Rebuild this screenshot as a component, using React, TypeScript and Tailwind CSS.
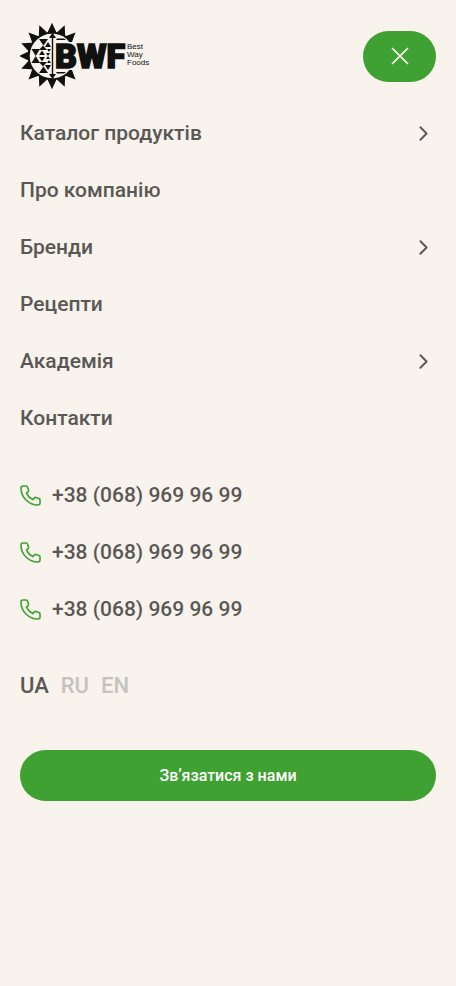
import { ChevronRight, X } from 'lucide-react';

const MENU = [
  { label: 'Каталог продуктів', nested: true },
  { label: 'Про компанію', nested: false },
  { label: 'Бренди', nested: true },
  { label: 'Рецепти', nested: false },
  { label: 'Академія', nested: true },
  { label: 'Контакти', nested: false },
];

const PHONES = ['+38 (068) 969 96 99', '+38 (068) 969 96 99', '+38 (068) 969 96 99'];

// sun rays, clockwise from the top; the ones behind the lettering are left out
const RAYS = [0, 1, 2, 6, 7, 8, 9, 10, 11, 12, 13, 14, 15];

const Logo = () => (
  <svg width="131" height="68" viewBox="0 0 131 68" fill="#11110f" aria-label="BWF Best Way Foods">
    {RAYS.map((n) => (
      <path key={n} d="M32 0.800 L36.500 10.500 H27.500 Z" transform={`rotate(${n * 22.5} 32 34)`} />
    ))}
    <path d="M51 20.500 A23.300 23.300 0 1 0 51 47.500" fill="none" stroke="#11110f" strokeWidth="2" />
    {/* upper half of the ornament, mirrored for the lower one */}
    {['', 'matrix(1 0 0 -1 0 68)'].map((flip) => (
      <g key={flip} transform={flip}>
        <path d="M19 17 H28 L23.500 23.500 Z" />
        <path d="M11.500 27 H20 L15.700 34 Z" />
        <path d="M19 28 L23 23.500 L27 28 Z" />
        <path d="M19 33 L22 28.500 L25 33 Z" />
        <path d="M25 25 L28 20 L31 25 Z" />
        <path d="M27 27 H31 L29 30 Z M26 31 H30 L28 34 Z" />
        <path d="M32.500 10.800 L36 16 H33.200 V34 H31.800 V16 H29 Z" />
        <path d="M37 16.500 H44 L46 18 H36 Z" />
      </g>
    ))}
    <path d="M34 20 H60 V48 H34 Z" fill="#f8f3ed" />
    <text
      x="35"
      y="46"
      fontFamily="Roboto, sans-serif"
      fontSize="34"
      fontWeight="900"
      stroke="#11110f"
      strokeWidth="1.6"
    >
      BWF
    </text>
    <g fontFamily="Liberation Sans, sans-serif" fontSize="8">
      <text x="107" y="27">Best</text>
      <text x="107" y="35">Way</text>
      <text x="107" y="43">Foods</text>
    </g>
  </svg>
);

const PhoneIcon = () => (
  <svg
    width="21"
    height="21"
    viewBox="0 0 21 21"
    fill="none"
    stroke="#3ea131"
    strokeWidth="1.6"
    strokeLinecap="round"
    strokeLinejoin="round"
  >
    <path d="M3 1 H6.200 Q7.200 1 7.500 2 L8.500 5 Q8.800 6 8 6.700 L6.400 8.100 C7.800 11 10 13.200 12.900 14.600 L14.300 13 Q15 12.200 16 12.500 L19 13.500 Q20 13.800 20 14.800 V18 Q20 20 18 20 C8.600 20 1 12.400 1 3 Q1 1 3 1 Z" />
  </svg>
);

const App = () => {
  return (
    <div className="min-h-screen bg-[#f8f3ed] px-5 pt-[22px] pb-10 font-['Roboto',sans-serif] text-[21px] leading-8 font-medium text-[#5a5855]">
      <header className="flex items-center justify-between">
        <a href="#home">
          <Logo />
        </a>
        <button
          type="button"
          aria-label="Закрити меню"
          className="flex h-[51px] w-[73px] items-center justify-center rounded-full bg-[#3ea131] text-white"
        >
          <X size={30} strokeWidth={1.4} />
        </button>
      </header>

      <nav className="mt-[27px] flex flex-col gap-[25px]">
        {MENU.map((item) => (
          <a key={item.label} href="#menu" className="flex items-center justify-between">
            {item.label}
            {item.nested && <ChevronRight size={25} strokeWidth={1.8} />}
          </a>
        ))}
      </nav>

      <div className="mt-[45px] flex flex-col gap-[25px]">
        {PHONES.map((phone, idx) => (
          <a key={idx} href="tel:+380689699699" className="flex items-center gap-[11px]">
            <PhoneIcon />
            {phone}
          </a>
        ))}
      </div>

      <div className="mt-[45px] flex gap-3 text-[22px]">
        <a href="#ua">UA</a>
        <a href="#ru" className="text-[#c5c2be]">RU</a>
        <a href="#en" className="text-[#c5c2be]">EN</a>
      </div>

      <button type="button" className="mt-12 h-[51px] w-full rounded-full bg-[#3ea131] text-base text-white">
        Звʼязатися з нами
      </button>
    </div>
  );
};

export default App;
